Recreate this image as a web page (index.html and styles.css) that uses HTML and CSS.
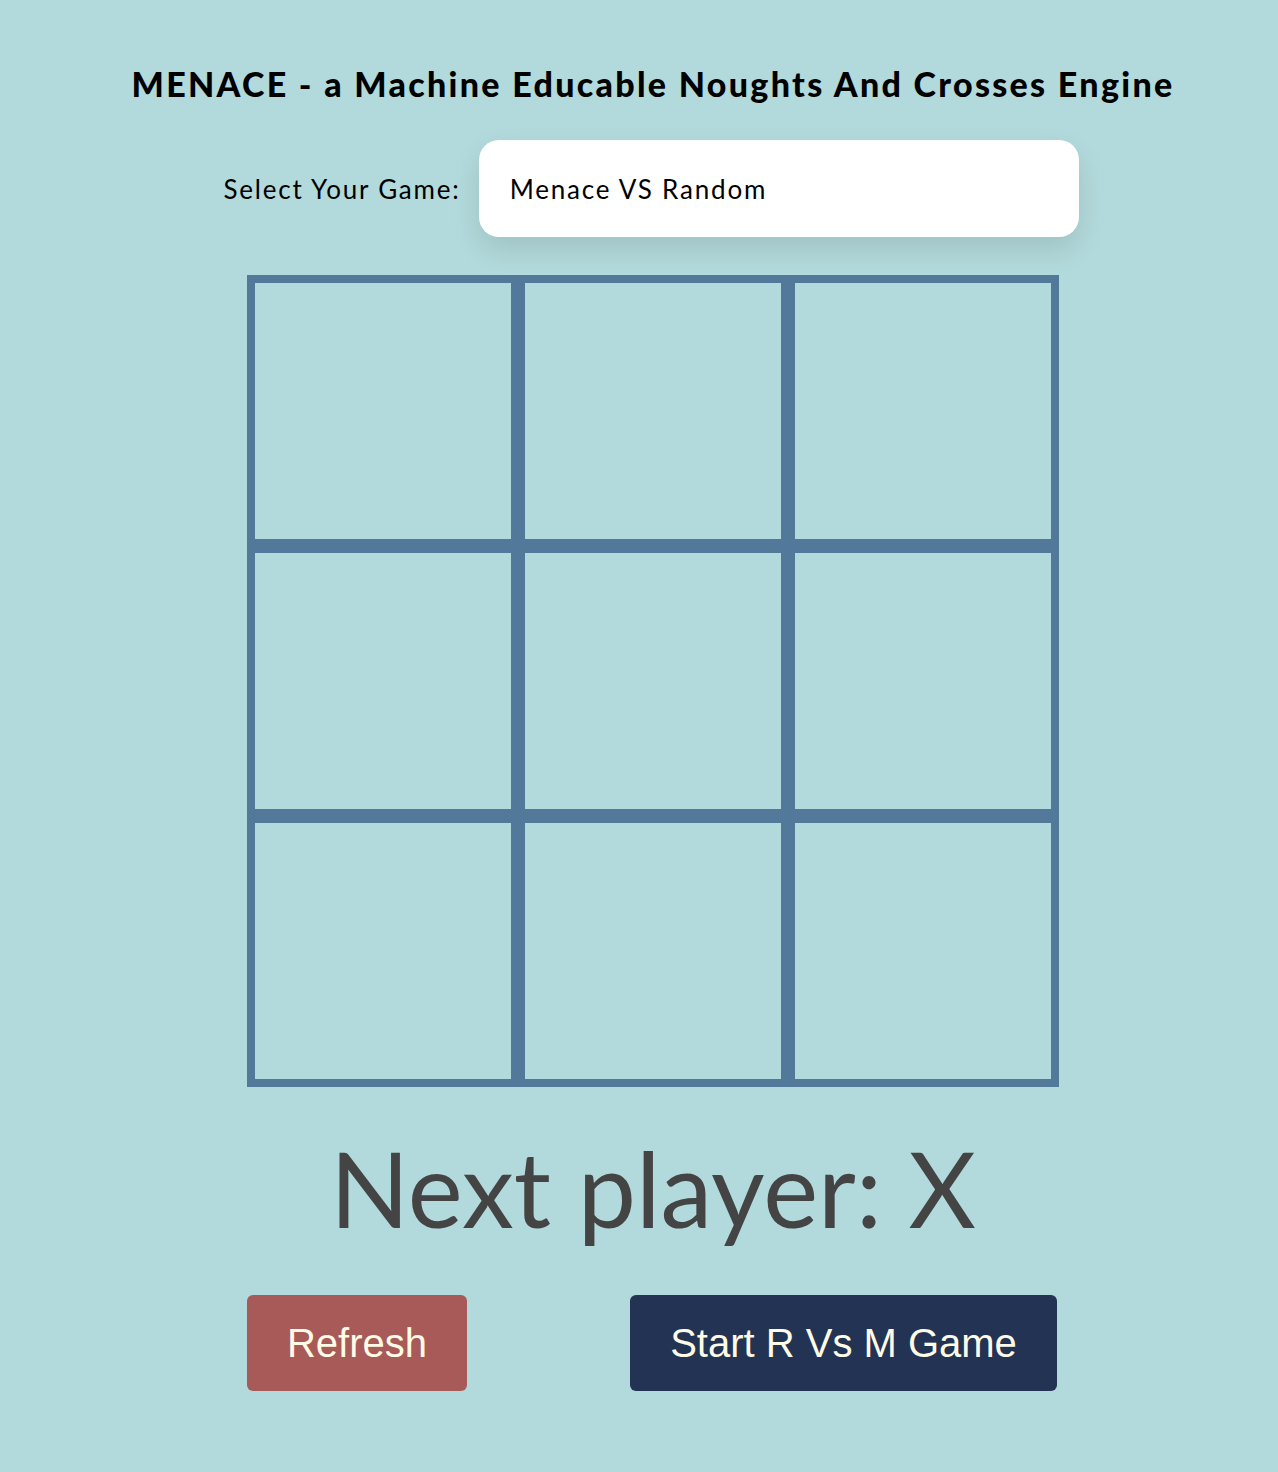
FILE: index.html
```html
<!DOCTYPE HTML><html>
<head>
  <title>MENACE</title>
  <meta name="viewport" content="width=device-width, initial-scale=1">
  <link rel="stylesheet" href="styles.css">
</head>
<body>
  <div class="app">
    <h1 class="title">MENACE - a Machine Educable Noughts And Crosses Engine</h1>
    <div class="picker">
      <label class="picker-label" for="game">Select Your Game:</label>
      <div class="picker-box" id="game">Menace VS Random</div>
    </div>
    <div class="board">
      <div class="cell"></div><div class="cell"></div><div class="cell"></div>
      <div class="cell"></div><div class="cell"></div><div class="cell"></div>
      <div class="cell"></div><div class="cell"></div><div class="cell"></div>
    </div>
    <div class="status">Next player: X</div>
    <div class="actions">
      <button class="btn btn-refresh">Refresh</button>
      <button class="btn btn-start">Start R Vs M Game</button>
    </div>
  </div>
</body>
</html>
```

FILE: styles.css
```css
html {background: #b2d9db;}
body {margin: 0; font-family: Lato, "Noto Sans", sans-serif; color: #000;}
.app {display: flex; flex-direction: column; align-items: center; padding-left: 28px; padding-bottom: 80px;}
.title {font-size: 34px; font-weight: 900; margin: 62px 0 0 0; line-height: 44px; letter-spacing: 2.3px;}
.picker {display: flex; align-items: center; gap: 18px; margin: 34px 4px 0 0;}
.picker-label {font-size: 26px; letter-spacing: 1.8px;}
.picker-box {width: 600px; height: 97px; box-sizing: border-box; background: #fff; border-radius: 20px; padding-left: 31px; display: flex; align-items: center; font-size: 26px; letter-spacing: 1.8px; box-shadow: 0 12px 28px rgba(0,0,0,0.1);}
.board {display: grid; grid-template-columns: repeat(3, 270px); grid-template-rows: repeat(3, 270px); margin-top: 38px; border: 1px solid #52799a;}
.cell {border: 7px solid #52799a;}
.status {font-size: 104px; color: #444; margin-top: 36px; line-height: 130px;}
.actions {display: flex; justify-content: space-between; width: 810px; margin: 42px 2px 0 0;}
.btn {height: 96px; border: none; border-radius: 6px; font-family: "Liberation Sans", Arial, sans-serif; font-size: 40px; color: #fffbe6;}
.btn-refresh {width: 220px; background: #a85a58;}
.btn-start {width: 427px; background: #223354;}
```
